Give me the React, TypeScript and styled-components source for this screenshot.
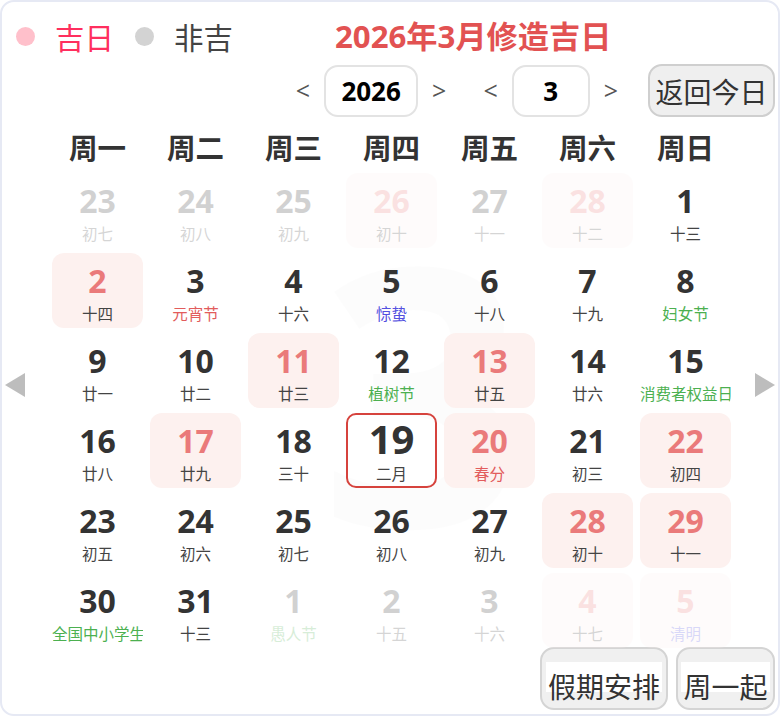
import React from "react";
import styled, { createGlobalStyle } from "styled-components";

const GlobalStyle = createGlobalStyle`
  html, body {
    margin: 0;
    padding: 0;
    background: #ffffff;
  }
  body {
    font-family: "Open Sans", "Noto Sans CJK SC", sans-serif;
  }
`;

type Tone = "normal" | "red" | "blue" | "green";

type Day = {
  n: number;
  sub: string;
  tone?: Tone;
  good?: boolean;
  faded?: boolean;
  today?: boolean;
};

const days: Day[] = [
  { n: 23, sub: "初七", faded: true },
  { n: 24, sub: "初八", faded: true },
  { n: 25, sub: "初九", faded: true },
  { n: 26, sub: "初十", faded: true, good: true },
  { n: 27, sub: "十一", faded: true },
  { n: 28, sub: "十二", faded: true, good: true },
  { n: 1, sub: "十三" },

  { n: 2, sub: "十四", good: true },
  { n: 3, sub: "元宵节", tone: "red" },
  { n: 4, sub: "十六" },
  { n: 5, sub: "惊蛰", tone: "blue" },
  { n: 6, sub: "十八" },
  { n: 7, sub: "十九" },
  { n: 8, sub: "妇女节", tone: "green" },

  { n: 9, sub: "廿一" },
  { n: 10, sub: "廿二" },
  { n: 11, sub: "廿三", good: true },
  { n: 12, sub: "植树节", tone: "green" },
  { n: 13, sub: "廿五", good: true },
  { n: 14, sub: "廿六" },
  { n: 15, sub: "消费者权益日", tone: "green" },

  { n: 16, sub: "廿八" },
  { n: 17, sub: "廿九", good: true },
  { n: 18, sub: "三十" },
  { n: 19, sub: "二月", today: true },
  { n: 20, sub: "春分", tone: "red", good: true },
  { n: 21, sub: "初三" },
  { n: 22, sub: "初四", good: true },

  { n: 23, sub: "初五" },
  { n: 24, sub: "初六" },
  { n: 25, sub: "初七" },
  { n: 26, sub: "初八" },
  { n: 27, sub: "初九" },
  { n: 28, sub: "初十", good: true },
  { n: 29, sub: "十一", good: true },

  { n: 30, sub: "全国中小学生安全教育日", tone: "green" },
  { n: 31, sub: "十三" },
  { n: 1, sub: "愚人节", tone: "green", faded: true },
  { n: 2, sub: "十五", faded: true },
  { n: 3, sub: "十六", faded: true },
  { n: 4, sub: "十七", faded: true, good: true },
  { n: 5, sub: "清明", tone: "blue", faded: true, good: true },
];

const weekdays = ["周一", "周二", "周三", "周四", "周五", "周六", "周日"];

const toneColor: Record<Tone, string> = {
  normal: "#444444",
  red: "#e25c5c",
  blue: "#5450e0",
  green: "#4cb050",
};

export default function App() {
  return (
    <>
      <GlobalStyle />
      <Card>
        <Watermark>3</Watermark>

        <TopBar>
          <Legend>
            <LegendItem>
              <Dot color="#ffc0cb" />
              <LegendText color="#ff2f5e">吉日</LegendText>
            </LegendItem>
            <LegendItem>
              <Dot color="#d3d3d3" />
              <LegendText color="#444444">非吉</LegendText>
            </LegendItem>
          </Legend>
          <Title>2026年3月修造吉日</Title>
        </TopBar>

        <NavRow>
          <Stepper>
            <Arrow>&lt;</Arrow>
            <ValueBox width={94}>2026</ValueBox>
            <Arrow>&gt;</Arrow>
          </Stepper>
          <Stepper>
            <Arrow>&lt;</Arrow>
            <ValueBox width={78}>3</ValueBox>
            <Arrow>&gt;</Arrow>
          </Stepper>
          <GrayButton>返回今日</GrayButton>
        </NavRow>

        <WeekHeader>
          {weekdays.map((w) => (
            <WeekName key={w}>{w}</WeekName>
          ))}
        </WeekHeader>

        <DayGrid>
          {days.map((d, i) => (
            <DayCell key={i} good={d.good} faded={d.faded} today={d.today}>
              <DayNum good={d.good} today={d.today}>
                {d.n}
              </DayNum>
              <DaySub tone={d.tone || "normal"}>{d.sub}</DaySub>
            </DayCell>
          ))}
        </DayGrid>

        <SideArrow side="left">
          <svg width="20" height="24" viewBox="0 0 20 24">
            <polygon points="20,0 20,24 0,12" fill="#bdbdbd" />
          </svg>
        </SideArrow>
        <SideArrow side="right">
          <svg width="20" height="24" viewBox="0 0 20 24">
            <polygon points="0,0 0,24 20,12" fill="#bdbdbd" />
          </svg>
        </SideArrow>

        <Footer>
          <FooterButton width={128}>
            <Label>假期安排</Label>
          </FooterButton>
          <FooterButton width={99}>
            <Label>周一起</Label>
          </FooterButton>
        </Footer>
      </Card>
    </>
  );
}

const Card = styled.div`
  position: relative;
  width: 780px;
  height: 716px;
  box-sizing: border-box;
  border: 2px solid #e6e9f4;
  border-radius: 14px;
  background: #ffffff;
  overflow: hidden;
  display: flex;
  flex-direction: column;
`;

const Watermark = styled.div`
  position: absolute;
  left: 318px;
  top: 205px;
  font-family: "Open Sans", sans-serif;
  font-size: 360px;
  font-weight: 700;
  line-height: 1;
  color: rgba(0, 0, 0, 0.01);
  pointer-events: none;
`;

const TopBar = styled.div`
  position: relative;
  height: 56px;
  padding-top: 6px;
  padding-left: 14px;
  display: flex;
  align-items: center;
`;

const Legend = styled.div`
  display: flex;
  align-items: center;
  gap: 21px;
`;

const LegendItem = styled.div`
  display: flex;
  align-items: center;
  gap: 20px;
`;

const Dot = styled.span<{ color: string }>`
  width: 19px;
  height: 19px;
  border-radius: 50%;
  background: ${(p) => p.color};
`;

const LegendText = styled.span<{ color: string }>`
  font-family: "Noto Sans CJK SC", sans-serif;
  font-size: 29.5px;
  line-height: 40px;
  color: ${(p) => p.color};
`;

const Title = styled.h1`
  margin: 0 0 0 102px;
  font-family: "Open Sans", "Noto Sans CJK SC", sans-serif;
  font-size: 31.2px;
  font-weight: 700;
  line-height: 40px;
  color: #e25252;
`;

const NavRow = styled.div`
  position: relative;
  height: 53px;
  display: flex;
  align-items: center;
  justify-content: flex-end;
  padding-right: 3px;
  gap: 37px;
`;

const Stepper = styled.div`
  display: flex;
  align-items: center;
  gap: 14px;
`;

const Arrow = styled.span`
  font-family: "Open Sans", sans-serif;
  font-size: 25px;
  color: #555555;
  line-height: 1;
`;

const ValueBox = styled.div<{ width: number }>`
  width: ${(p) => p.width}px;
  height: 52px;
  box-sizing: border-box;
  border: 2px solid #e3e3e3;
  border-radius: 14px;
  display: flex;
  align-items: center;
  justify-content: center;
  font-family: "Open Sans", sans-serif;
  font-size: 26px;
  font-weight: 700;
  color: #000000;
`;

const GrayButton = styled.button`
  margin-left: -7px;
  width: 127px;
  height: 53px;
  box-sizing: border-box;
  border: 2px solid #cfcfcf;
  border-radius: 14px;
  background: #efefef;
  padding: 0;
  font-family: "Noto Sans CJK SC", sans-serif;
  font-size: 28px;
  color: #333333;
`;

const WeekHeader = styled.div`
  position: relative;
  height: 52px;
  padding-top: 4px;
  margin-left: 50px;
  display: grid;
  grid-template-columns: repeat(7, 91px);
  column-gap: 7px;
`;

const WeekName = styled.div`
  text-align: center;
  font-family: "Noto Sans CJK SC", sans-serif;
  font-size: 28.5px;
  font-weight: 700;
  line-height: 52px;
  color: #333333;
`;

const DayGrid = styled.div`
  position: relative;
  margin-left: 50px;
  display: grid;
  grid-template-columns: repeat(7, 91px);
  grid-auto-rows: 75px;
  column-gap: 7px;
  row-gap: 5px;
`;

const DayCell = styled.div<{ good?: boolean; faded?: boolean; today?: boolean }>`
  box-sizing: border-box;
  border-radius: ${(p) => (p.today ? "10px" : "12px")};
  border: ${(p) => (p.today ? "2px solid #d6433d" : "none")};
  background: ${(p) => (p.good ? "#fdf1ef" : "transparent")};
  opacity: ${(p) => (p.faded ? 0.22 : 1)};
  padding-top: ${(p) => (p.today ? "4px" : "10px")};
  display: flex;
  flex-direction: column;
  align-items: stretch;
  overflow: hidden;
`;

const DayNum = styled.div<{ good?: boolean; today?: boolean }>`
  text-align: center;
  font-family: "Open Sans", sans-serif;
  font-size: ${(p) => (p.today ? "40px" : "32px")};
  font-weight: 700;
  line-height: ${(p) => (p.today ? "40px" : "36px")};
  color: ${(p) => (p.good ? "#ea7a7a" : "#333333")};
`;

const DaySub = styled.div<{ tone: Tone }>`
  margin-top: 4px;
  text-align: center;
  white-space: nowrap;
  font-family: "Noto Sans CJK SC", sans-serif;
  font-size: 15.5px;
  line-height: 20px;
  color: ${(p) => toneColor[p.tone]};
`;

const SideArrow = styled.div<{ side: "left" | "right" }>`
  position: absolute;
  top: 371px;
  ${(p) => (p.side === "left" ? "left: 3px;" : "right: 3px;")}
  width: 20px;
  height: 24px;
  display: flex;
`;

const Footer = styled.div`
  display: flex;
  justify-content: flex-end;
  gap: 8px;
  margin-top: -1px;
  padding-right: 3px;
`;

const FooterButton = styled.button<{ width: number }>`
  width: ${(p) => p.width}px;
  height: 63px;
  box-sizing: border-box;
  border: 2px solid #d4d4d4;
  border-radius: 14px;
  background: #f0f0f0;
  padding: 0;
  display: flex;
  align-items: flex-start;
  justify-content: center;
  padding-top: 13px;
`;

const Label = styled.span`
  display: inline-block;
  height: 30px;
  padding: 0 2px;
  background: #ffffff;
  font-family: "Noto Sans CJK SC", sans-serif;
  font-size: 28px;
  line-height: 48px;
  color: #333333;
  white-space: nowrap;
`;
